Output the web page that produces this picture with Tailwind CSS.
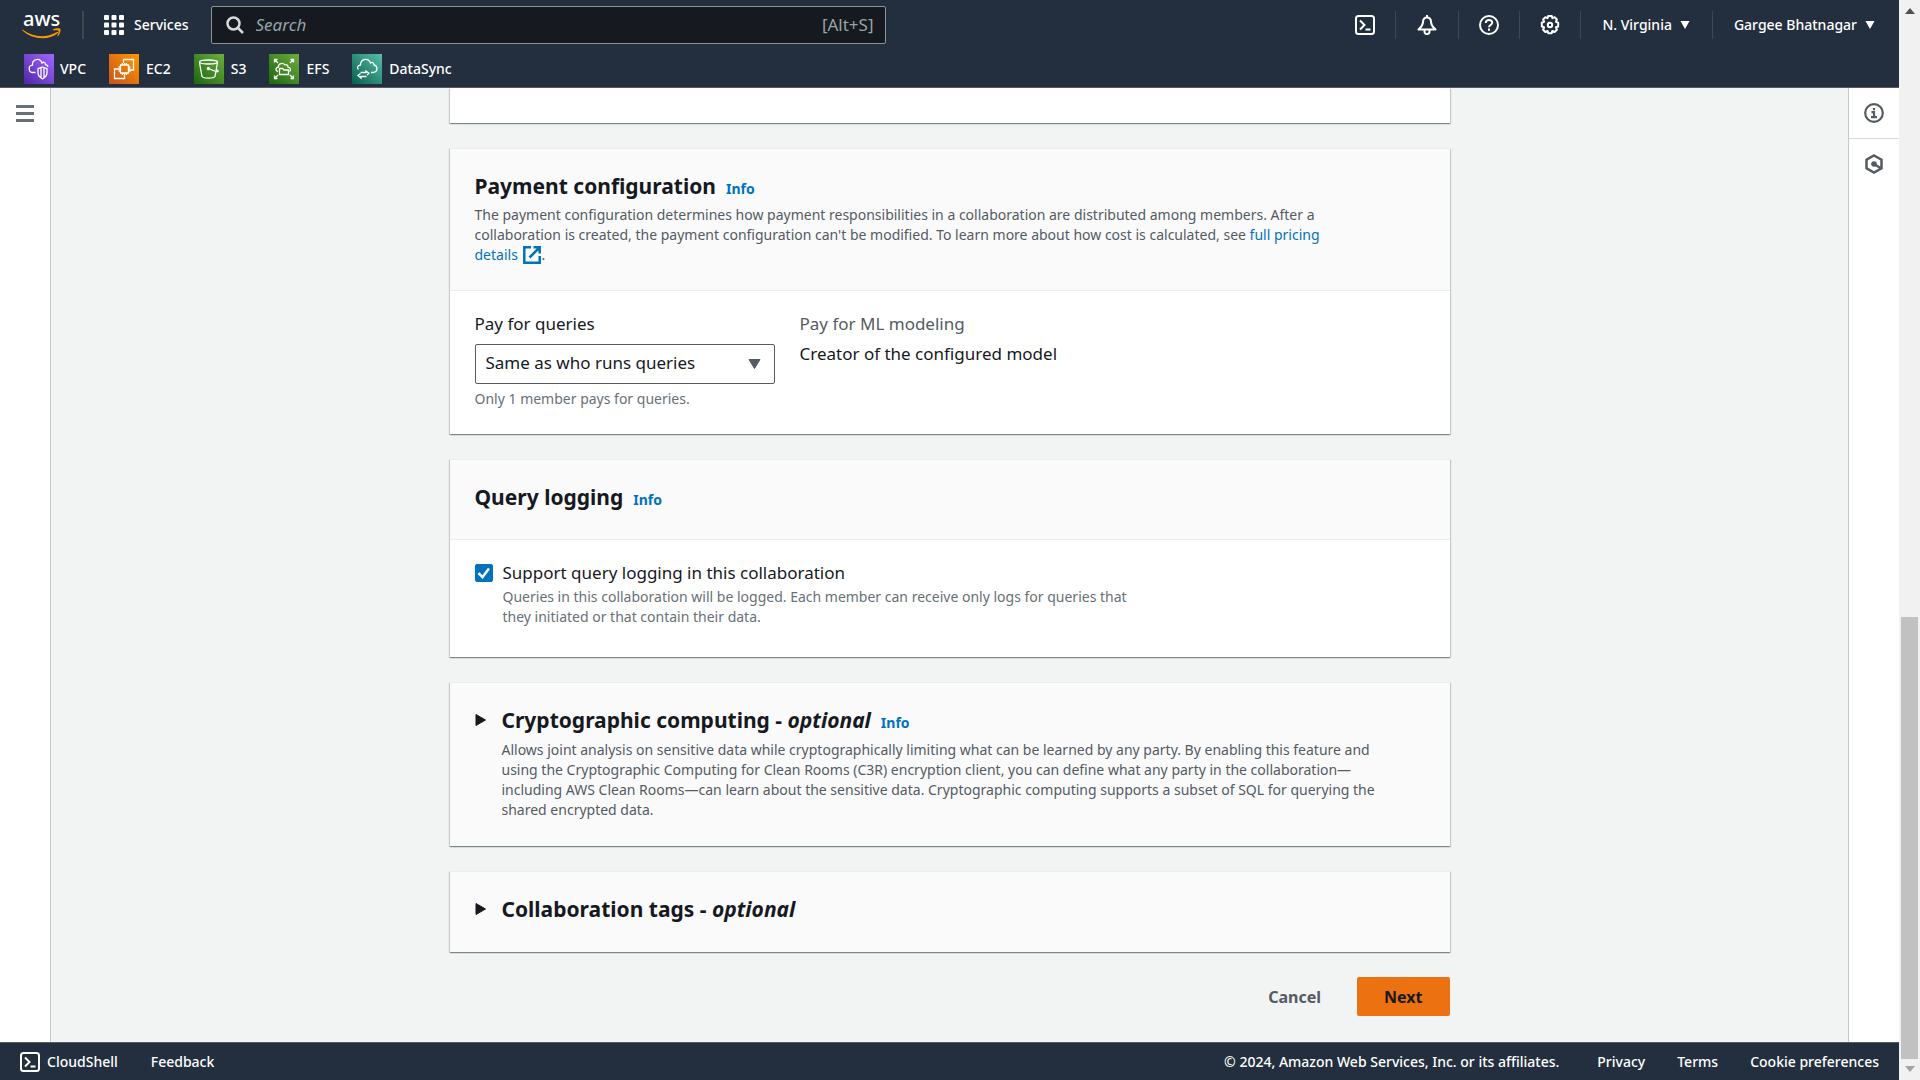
<!DOCTYPE html>
<html lang="en">
<head>
  <meta charset="UTF-8" />
  <meta name="viewport" content="width=device-width,initial-scale=1.0"/>
  <title>Create collaboration • AWS Clean Rooms</title>
  <script src="https://cdn.jsdelivr.net/npm/@tailwindcss/browser@4"></script>
</head>
<body class="flex h-screen overflow-hidden bg-[#f2f3f3] font-['Noto_Sans','Open_Sans',sans-serif] text-[17px] leading-[25px] text-[#16191f]">

  <div class="flex min-w-0 flex-1 flex-col">

    <!-- Top navigation -->
    <header class="border-b border-[#545b64] bg-[#232f3e] pt-[6px] pb-[3px] text-sm font-medium text-white">
      <div class="flex h-[38px] items-center">
        <a href="#" aria-label="AWS home" class="ml-[22px]">
          <svg class="block h-8 w-10 overflow-visible" viewBox="0 0 40 32">
            <text x="1" y="17" font-size="20" font-weight="500" fill="#fff">aws</text>
            <path d="M0.5 20.5c11 8.500 24 8.500 34.500 2.500c1-.4 1.600.6.7 1.300C26 32 9.500 30.500.200 21.300c-.3-.4-.1-1 .3-.8z" fill="#f90"/>
            <path d="M31 20.500c2.500-1.500 6.500-1.500 7.300-.6c.7 1.200-.3 5.300-2.300 7.200c-.5.4-.9.2-.6-.4c.8-1.800 1.600-4.300 1.100-5c-.6-.6-3-.6-5.300-.5c-.5 0-.7-.4-.2-.7z" fill="#f90"/>
          </svg>
        </a>
        <div class="ml-5 h-7 w-0.5 bg-[#414750]"></div>
        <button class="ml-5 flex items-center gap-[10px]">
          <svg class="h-5 w-5" viewBox="0 0 20 20" fill="#fff">
            <rect width="5" height="5" rx="1"/><rect x="7.500" width="5" height="5" rx="1"/><rect x="15" width="5" height="5" rx="1"/>
            <rect y="7.500" width="5" height="5" rx="1"/><rect x="7.500" y="7.500" width="5" height="5" rx="1"/><rect x="15" y="7.500" width="5" height="5" rx="1"/>
            <rect y="15" width="5" height="5" rx="1"/><rect x="7.500" y="15" width="5" height="5" rx="1"/><rect x="15" y="15" width="5" height="5" rx="1"/>
          </svg>
          Services
        </button>
        <label class="ml-[22px] flex h-[38px] w-[675px] items-center rounded-xs border border-[#879596] bg-[#16191f] pr-[11px] pl-[14px] text-[17px] font-normal text-[#95a5a6]">
          <svg class="h-[18px] w-[18px]" viewBox="0 0 18 18" fill="none" stroke="#d5dbdb" stroke-width="2.500"><circle cx="7.500" cy="7.500" r="6"/><path d="M12 12l5 5"/></svg>
          <input type="text" aria-label="Search" placeholder="Search" class="ml-3 min-w-0 flex-1 bg-transparent outline-none placeholder:italic placeholder:text-[#95a5a6]"/>
          <span>[Alt+S]</span>
        </label>

        <div class="ml-auto flex items-center">
          <button aria-label="CloudShell" class="mr-5">
            <svg class="h-5 w-5" viewBox="0 0 20 20" fill="none" stroke="#fff" stroke-width="2"><rect x="1" y="1" width="18" height="18" rx="2.500"/><path d="M5 5.500l4.500 4.500L5 14.500M10.500 14.500h5"/></svg>
          </button>
          <div class="h-7 w-px bg-[#414750]"></div>
          <button aria-label="Notifications" class="mx-[21px]">
            <svg class="h-5 w-5" viewBox="0 0 20 20" fill="none" stroke="#fff" stroke-width="2" stroke-linejoin="round"><path d="M10 0v3M10 2.500c-3 0-4 2-4 4.500 0 3.500-1.500 4.500-4.500 7.500h17c-3-3-4.500-4-4.500-7.500 0-2.500-1-4.500-4-4.500zM7.500 15v1.500a2.500 2.500 0 0 0 5 0V15"/></svg>
          </button>
          <div class="h-7 w-px bg-[#414750]"></div>
          <button aria-label="Help" class="mx-5">
            <svg class="h-5 w-5" viewBox="0 0 20 20" fill="none" stroke="#fff" stroke-width="2"><circle cx="10" cy="10" r="9"/><path d="M6.800 8c0-4 6.400-4 6.400-.3 0 2.300-3.200 2.300-3.200 4.600M10 13.500v2.200"/></svg>
          </button>
          <div class="h-7 w-px bg-[#414750]"></div>
          <button aria-label="Settings" class="mx-5">
            <svg class="h-5 w-5" viewBox="0 0 20 20" fill="none" stroke="#fff" stroke-width="2" stroke-linejoin="round"><path d="M8.200 1h3.600l.6 2.200 2.200-1 2.300 2.300-1 2.400 2.300.8v3.800l-2.300.8 1 2.400-2.300 2.300-2.300-1-.6 2.200H8.200l-.6-2.200-2.200 1-2.300-2.300 1-2.400-2.300-.8V7.700l2.300-.8-1-2.400 2.300-2.300 2.200 1z"/><circle cx="10" cy="10" r="2.200"/></svg>
          </button>
          <div class="h-7 w-px bg-[#414750]"></div>
          <button class="mr-[22px] ml-[21px] flex items-center gap-2">
            N. Virginia
            <svg class="h-2 w-[10px]" viewBox="0 0 10 8" fill="#fff"><path d="M.5 0h9L5 8z"/></svg>
          </button>
          <div class="h-7 w-px bg-[#414750]"></div>
          <button class="mr-6 ml-[21px] flex items-center gap-2">
            Gargee Bhatnagar
            <svg class="h-2 w-[10px]" viewBox="0 0 10 8" fill="#fff"><path d="M.5 0h9L5 8z"/></svg>
          </button>
        </div>
      </div>

      <!-- Favourite services -->
      <nav class="mt-[10px] ml-6 flex gap-[23px]">
        <a href="#" class="flex items-center gap-[6px]">
          <svg class="h-[30px] w-[30px]" viewBox="0 0 30 30" fill="none" stroke="#fff" stroke-width="1.300">
            <defs><linearGradient id="vpc" x1="0" y1="1" x2="1" y2="0"><stop stop-color="#4d27a8"/><stop offset="1" stop-color="#a166ff"/></linearGradient></defs>
            <rect width="30" height="30" fill="url(#vpc)" stroke="none"/>
            <path d="M11.500 18.500H9c-5 0-5-7-.5-7.300C8 4.500 16 3.500 18 9c1.500-1.500 3.500-.5 3.500 1.700 1.500.2 2.200 1 2.500 2.300M18.500 13l4.500 1.600v4c0 3-2 5-4.500 6.200-2.500-1.200-4.500-3.200-4.500-6.200v-4zM17 14v9.500M20 14v9.500"/>
          </svg>
          VPC
        </a>
        <a href="#" class="flex items-center gap-[7px]">
          <svg class="h-[30px] w-[30px]" viewBox="0 0 30 30" fill="none" stroke="#fff" stroke-width="1.300">
            <defs><linearGradient id="ec2" x1="0" y1="1" x2="1" y2="0"><stop stop-color="#c8511b"/><stop offset="1" stop-color="#f90"/></linearGradient></defs>
            <rect width="30" height="30" fill="url(#ec2)" stroke="none"/>
            <path d="M14.500 9V5.500h10v10.500H21M10 15H5.500v9.500h10V21M11.500 11h8v8h-8zM13.500 9v2M15.500 9v2M17.500 9v2M13.500 19v2M15.500 19v2M17.500 19v2M9.500 13h2M9.500 15h2M9.500 17h2M19.500 13h2M19.500 15h2M19.500 17h2"/>
          </svg>
          EC2
        </a>
        <a href="#" class="flex items-center gap-[7px]">
          <svg class="h-[30px] w-[30px]" viewBox="0 0 30 30" fill="none" stroke="#fff" stroke-width="1.300">
            <defs><linearGradient id="s3" x1="0" y1="1" x2="1" y2="0"><stop stop-color="#1b660f"/><stop offset="1" stop-color="#6cae3e"/></linearGradient></defs>
            <rect width="30" height="30" fill="url(#s3)" stroke="none"/>
            <ellipse cx="14.500" cy="8" rx="9" ry="2"/>
            <path d="M5.500 8.500l2.500 14c1.500 2.200 11.500 2.200 13 0l2.500-14M14.500 14.500l6 2.500c4 1.500 5 .3 1.700-1.700"/><circle cx="14.300" cy="14.500" r="1"/>
          </svg>
          S3
        </a>
        <a href="#" class="flex items-center gap-[7px]">
          <svg class="h-[30px] w-[30px]" viewBox="0 0 30 30" fill="none" stroke="#fff" stroke-width="1.300">
            <rect width="30" height="30" fill="url(#s3)" stroke="none"/>
            <path d="M5.500 8.500v-3h3M5.500 5.500l3.500 3.500M21.500 5.500h3v3M24.500 5.500L21 9M5.500 21.500v3h3M5.500 24.500L9 21M24.500 21.500v3h-3M24.500 24.500L21 21"/>
            <path d="M9 17.500c-3-.8-2.500-4 .3-4.300 0-4 4.700-5 6.500-2.300 2-.8 3.200.5 3.200 2.300 2.800.3 3.300 3.300 1.500 4.300M10.500 20.500v-6h3.300l1 1.500h4.700v4.500z"/>
          </svg>
          EFS
        </a>
        <a href="#" class="flex items-center gap-[7px]">
          <svg class="h-[30px] w-[30px]" viewBox="0 0 30 30" fill="none" stroke="#fff" stroke-width="1.300">
            <defs><linearGradient id="sync" x1="0" y1="1" x2="1" y2="0"><stop stop-color="#055f4e"/><stop offset="1" stop-color="#56c0a7"/></linearGradient></defs>
            <rect width="30" height="30" fill="url(#sync)" stroke="none"/>
            <path d="M6.500 15.500c-2-2-1-4 2-4.500C8.500 4.500 16.500 3.500 18.500 9c1.500-1.300 3.300-.3 3.500 1.900 4 1 4 7-.5 7.600H19M8.500 18.500h5.500v-1.500l3 2.300-2 1.700M14.500 22.500H9v1.500l-3-2.500 2.500-2"/>
          </svg>
          DataSync
        </a>
      </nav>
    </header>

    <div class="flex min-h-0 flex-1">
      <!-- Left rail -->
      <aside class="w-[51px] shrink-0 border-r border-[#c3cacc] bg-white">
        <button aria-label="Open navigation" class="mt-[17px] ml-4 flex w-[18px] flex-col gap-1">
          <span class="h-[3px] w-full bg-[#687078]"></span>
          <span class="h-[3px] w-full bg-[#687078]"></span>
          <span class="h-[3px] w-full bg-[#687078]"></span>
        </button>
      </aside>

      <!-- Wizard form -->
      <main class="min-w-0 flex-1 overflow-hidden">
        <form class="mx-auto flex max-w-[1000px] flex-col gap-[25px]">
          <section class="h-[35px] bg-white shadow-[0_1px_1px_rgba(0,28,36,0.3),1px_1px_1px_rgba(0,28,36,0.15),-1px_1px_1px_rgba(0,28,36,0.15)]"></section>

          <section class="border-t border-[#eaeded] bg-white shadow-[0_1px_1px_rgba(0,28,36,0.3),1px_1px_1px_rgba(0,28,36,0.15),-1px_1px_1px_rgba(0,28,36,0.15)]">
            <div class="border-b border-[#eaeded] bg-[#fafafa] px-[25px] pt-[22px] pb-[25px]">
              <div class="flex items-baseline gap-[10px]">
                <h2 class="text-[21px] leading-[30px] font-bold">Payment configuration</h2>
                <a href="#" class="text-sm font-bold text-[#0073bb]">Info</a>
              </div>
              <p class="mt-1 max-w-[890px] text-sm leading-5 text-[#545b64]">
                The payment configuration determines how payment responsibilities in a collaboration are distributed among members. After a collaboration is created, the payment configuration can't be modified. To learn more about how cost is calculated, see
                <a href="#" class="text-[#0073bb]">full pricing details
                  <svg class="ml-0.5 inline-block h-[18px] w-[18px] align-[-4px]" viewBox="0 0 18 18" fill="none" stroke="#0073bb" stroke-width="2.500"><path d="M8 1.300H1.300v15.400h15.400V10M10.500 1.300h6.200v6.200M16.500 1.500L6.500 11.500"/></svg></a>.
              </p>
            </div>
            <div class="flex gap-[25px] px-[25px] pt-5 pb-[25px]">
              <div class="w-[300px]">
                <label for="payer" class="block">Pay for queries</label>
                <div class="relative mt-2">
                  <select id="payer" class="h-10 w-full appearance-none rounded-xs border border-[#545b64] bg-white pb-[3px] pl-[10px]">
                    <option>Same as who runs queries</option>
                  </select>
                  <svg class="pointer-events-none absolute top-[15px] right-[14px] h-[10px] w-[13px]" viewBox="0 0 13 10" fill="#545b64" stroke="#545b64" stroke-linejoin="round"><path d="M1 .5h11L6.500 9.500z"/></svg>
                </div>
                <p class="mt-[5px] text-sm leading-5 text-[#687078]">Only 1 member pays for queries.</p>
              </div>
              <dl>
                <dt class="text-[#545b64]">Pay for ML modeling</dt>
                <dd class="mt-[5px]">Creator of the configured model</dd>
              </dl>
            </div>
          </section>

          <section class="border-t border-[#eaeded] bg-white shadow-[0_1px_1px_rgba(0,28,36,0.3),1px_1px_1px_rgba(0,28,36,0.15),-1px_1px_1px_rgba(0,28,36,0.15)]">
            <div class="flex items-baseline gap-[10px] border-b border-[#eaeded] bg-[#fafafa] px-[25px] pt-[22px] pb-[27px]">
              <h2 class="text-[21px] leading-[30px] font-bold">Query logging</h2>
              <a href="#" class="text-sm font-bold text-[#0073bb]">Info</a>
            </div>
            <div class="flex gap-[10px] px-[25px] pt-5 pb-[30px]">
              <div class="grid h-[25px] items-center">
                <input id="logging" type="checkbox" checked class="peer col-start-1 row-start-1 h-[18px] w-[18px] appearance-none rounded-xs border border-[#687078] checked:border-[#0073bb] checked:bg-[#0073bb]"/>
                <svg class="pointer-events-none invisible col-start-1 row-start-1 h-[18px] w-[18px] peer-checked:visible" viewBox="0 0 18 18" fill="none" stroke="#fff" stroke-width="2.500"><path d="M3.500 9.200l4 4L14 4.500"/></svg>
              </div>
              <div>
                <label for="logging" class="block">Support query logging in this collaboration</label>
                <p class="mt-0.5 max-w-[650px] text-sm leading-5 text-[#687078]">Queries in this collaboration will be logged. Each member can receive only logs for queries that they initiated or that contain their data.</p>
              </div>
            </div>
          </section>

          <details class="border-t border-[#eaeded] bg-[#fafafa] shadow-[0_1px_1px_rgba(0,28,36,0.3),1px_1px_1px_rgba(0,28,36,0.15),-1px_1px_1px_rgba(0,28,36,0.15)]">
            <summary class="flex list-none gap-4 px-[25px] pt-[22px] pb-[26px]">
              <svg class="mt-2 h-[14px] w-[11px]" viewBox="0 0 11 14" fill="#16191f" stroke="#16191f" stroke-linejoin="round"><path d="M1 1.500l9.500 5.500L1 12.500z"/></svg>
              <div>
                <div class="flex items-baseline gap-[10px]">
                  <h2 class="text-[21px] leading-[30px] font-bold">Cryptographic computing - <i>optional</i></h2>
                  <a href="#" class="text-sm font-bold text-[#0073bb]">Info</a>
                </div>
                <p class="mt-[5px] max-w-[905px] text-sm leading-5 text-[#545b64]">Allows joint analysis on sensitive data while cryptographically limiting what can be learned by any party. By enabling this feature and using the Cryptographic Computing for Clean Rooms (C3R) encryption client, you can define what any party in the collaboration—including AWS Clean Rooms—can learn about the sensitive data. Cryptographic computing supports a subset of SQL for querying the shared encrypted data.</p>
              </div>
            </summary>
          </details>

          <details class="border-t border-[#eaeded] bg-[#fafafa] shadow-[0_1px_1px_rgba(0,28,36,0.3),1px_1px_1px_rgba(0,28,36,0.15),-1px_1px_1px_rgba(0,28,36,0.15)]">
            <summary class="flex list-none gap-4 px-[25px] pt-[22px] pb-7">
              <svg class="mt-2 h-[14px] w-[11px]" viewBox="0 0 11 14" fill="#16191f" stroke="#16191f" stroke-linejoin="round"><path d="M1 1.500l9.500 5.500L1 12.500z"/></svg>
              <h2 class="text-[21px] leading-[30px] font-bold">Collaboration tags - <i>optional</i></h2>
            </summary>
          </details>

          <div class="flex justify-end gap-[9px] font-bold">
            <button type="button" class="h-[39px] px-[27px] text-base text-[#545b64]">Cancel</button>
            <button type="button" class="h-[39px] rounded-xs bg-[#ec7211] px-[27px] text-base">Next</button>
          </div>
        </form>
      </main>

      <!-- Help rail -->
      <aside class="w-[51px] shrink-0 border-l border-[#c3cacc] bg-white">
        <button aria-label="Info" class="flex h-[51px] w-full items-center justify-center border-b border-[#d5dbdb]">
          <svg class="h-5 w-5" viewBox="0 0 20 20" fill="none" stroke="#545b64" stroke-width="2.200"><circle cx="10" cy="10" r="8.800"/><path d="M10 5v2.200M7.500 9.200H10v5M7 14.200h6"/></svg>
        </button>
        <button aria-label="Tutorials" class="flex h-[50px] w-full items-center justify-center">
          <svg class="h-5 w-5" viewBox="0 0 20 20" fill="none" stroke="#545b64" stroke-width="2.500"><path d="M10 1.500l7.500 4.200v8.600L10 18.500l-7.500-4.200V5.700zM10 10l6.500 4"/><circle cx="10" cy="10" r="2.800" fill="#545b64" stroke="none"/></svg>
        </button>
      </aside>
    </div>

    <!-- Footer -->
    <footer class="flex h-[38px] shrink-0 items-center border-t border-[#545b64] bg-[#232f3e] px-5 text-sm font-medium text-white">
      <button class="flex items-center gap-[7px]">
        <svg class="h-5 w-5" viewBox="0 0 20 20" fill="none" stroke="#fff" stroke-width="2"><rect x="1" y="1" width="18" height="18" rx="2.500"/><path d="M5 5.500l4.500 4.500L5 14.500M10.500 14.500h5"/></svg>
        CloudShell
      </button>
      <a href="#" class="ml-[33px]">Feedback</a>
      <span class="ml-auto">© 2024, Amazon Web Services, Inc. or its affiliates.</span>
      <a href="#" class="ml-[38px]">Privacy</a>
      <a href="#" class="ml-8">Terms</a>
      <a href="#" class="ml-8">Cookie preferences</a>
    </footer>
  </div>

  <!-- Page scrollbar -->
  <div class="flex w-[21px] shrink-0 flex-col items-center bg-[#f1f1f1]">
    <svg class="mt-2 h-[6px] w-[10px]" viewBox="0 0 10 6" fill="#505050"><path d="M0 6h10L5 0z"/></svg>
    <div class="mt-auto h-[442px] w-[17px] bg-[#c1c1c1]"></div>
    <svg class="mt-[7px] mb-[8px] h-[6px] w-[10px]" viewBox="0 0 10 6" fill="#a3a3a3"><path d="M0 0h10L5 6z"/></svg>
  </div>

</body>
</html>
